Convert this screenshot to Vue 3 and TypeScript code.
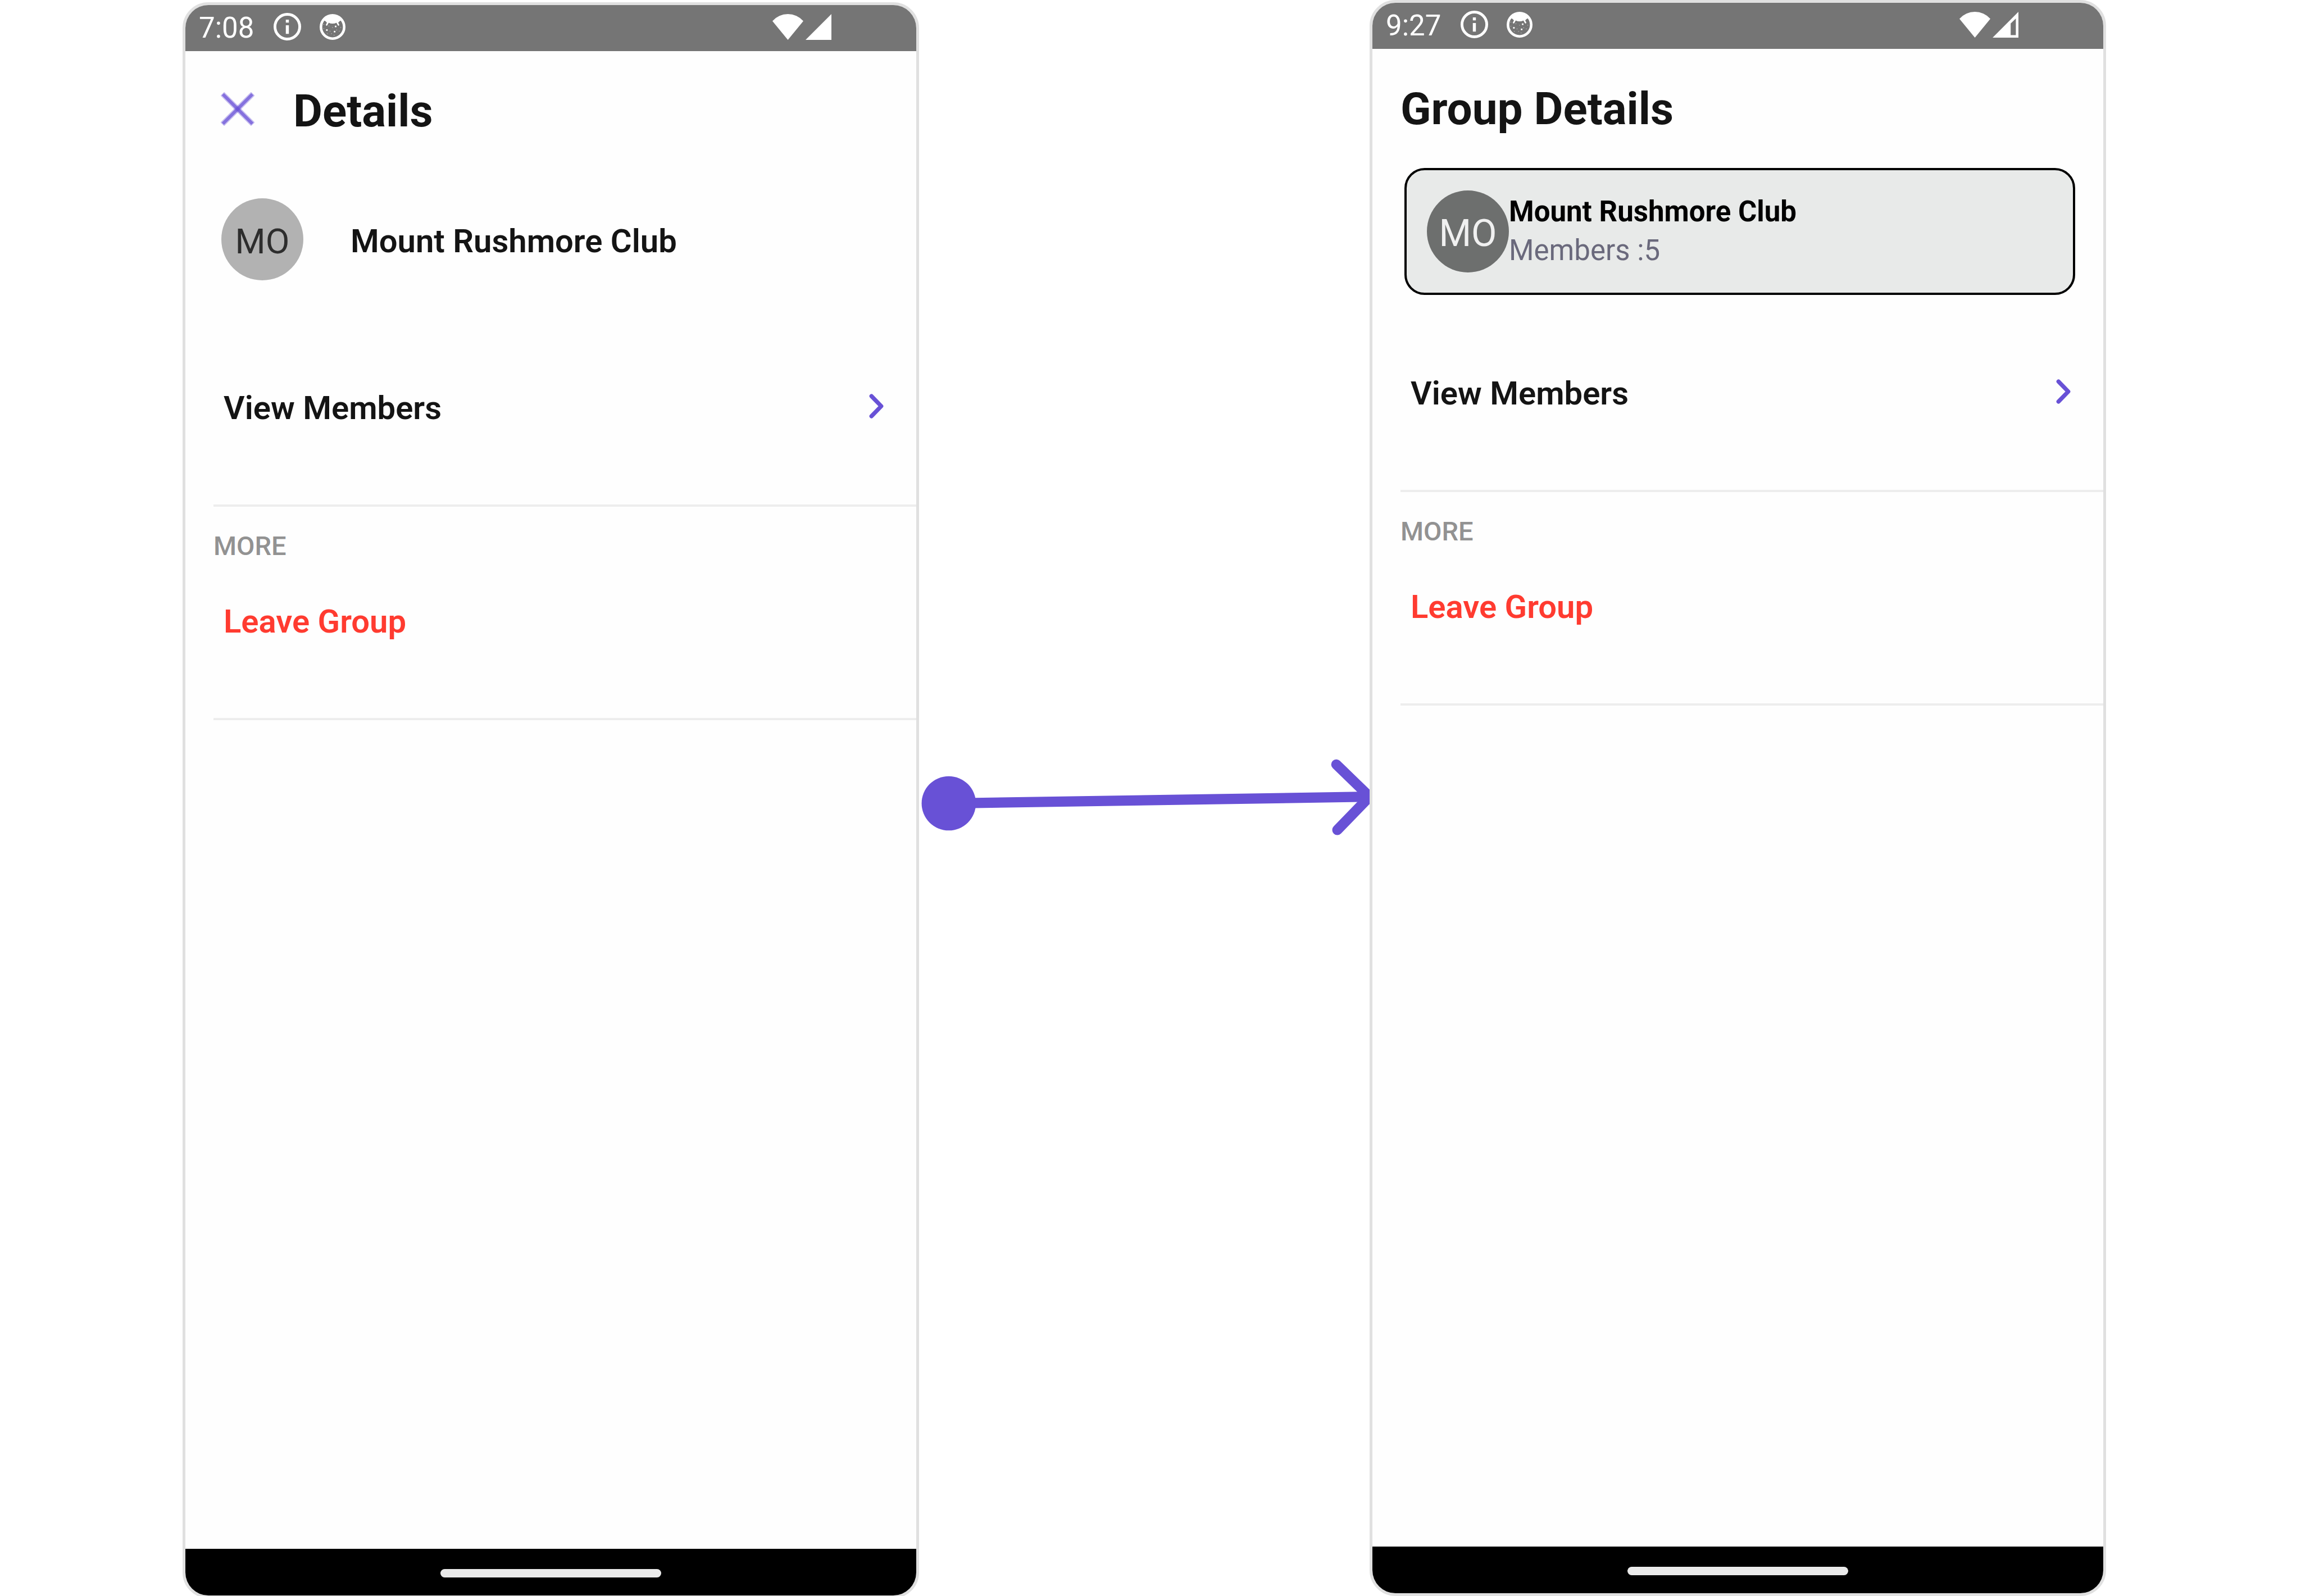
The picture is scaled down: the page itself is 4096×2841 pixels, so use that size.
<script setup lang="ts">
interface Screen {
  id: string
  time: string
  title: string
  closable: boolean
  partialSignal: boolean
  members?: number
}

const groupName = 'Mount Rushmore Club'
const initials = 'MO'

const screens: Screen[] = [
  { id: 'before', time: '7:08', title: 'Details', closable: true, partialSignal: false },
  { id: 'after', time: '9:27', title: 'Group Details', closable: false, partialSignal: true, members: 5 },
]

// Speckles in the notification glyph: x, y, size
const speckles: number[][] = [
  [31, 24, 3], [25, 26, 1], [8, 20, 1], [18, 23, 1], [41, 26, 1], [8, 28, 1], [14, 31, 3],
  [20, 33, 1], [29, 34, 3], [33, 31, 1], [38, 33, 1], [15, 38, 1], [23, 38, 1], [28, 41, 1],
]
</script>

<template>
  <main class="board">
    <section v-for="s in screens" :key="s.id" class="phone" :class="s.id">
      <div class="status">
        <span class="time">{{ s.time }}</span>
        <svg class="info" viewBox="0 0 54 54" aria-hidden="true">
          <circle cx="27" cy="27" r="24.3" fill="none" stroke="#fff" stroke-width="5.4" />
          <path d="M24 13.3h6v5.7h-6zM24 24.3h6V41h-6z" fill="#fff" />
        </svg>
        <svg class="glyph" viewBox="0 0 50 50" aria-hidden="true">
          <circle cx="25" cy="25" r="22.5" fill="none" stroke="#fff" stroke-width="5" />
          <path d="M5 12A24 24 0 0 1 45 12L41 12.5Q38 13.5 36 16.5H33Q25 20.5 17 16.5H14Q12 13.5 9 12.5Z" fill="#fff" />
          <path d="M16.5 15.5L13.5 21M33.5 15.5L36.5 21" stroke="#fff" stroke-width="3" stroke-linecap="round" />
          <rect
            v-for="(d, i) in speckles"
            :key="i"
            :x="d[0] - d[2] / 2"
            :y="d[1] - d[2] / 2"
            :width="d[2]"
            :height="d[2]"
            fill="#fff"
          />
        </svg>
        <svg class="wifi" viewBox="0 0 60 50" aria-hidden="true">
          <path d="M0 13.5A40 40 0 0 1 60 13.5L30 50Z" fill="#fff" />
        </svg>
        <svg class="signal" viewBox="0 0 50 50" aria-hidden="true">
          <path v-if="s.partialSignal" fill-rule="evenodd" d="M0 50L50 0V50ZM35 22.5V45H45V13Z" fill="#fff" />
          <path v-else d="M0 50L50 0V50Z" fill="#fff" />
        </svg>
      </div>

      <header class="header">
        <button v-if="s.closable" class="close" type="button" aria-label="Close">
          <svg viewBox="0 0 64 64" aria-hidden="true">
            <g stroke="#6851d6">
              <path d="M3 3L61 61" stroke-width="10" opacity=".35" />
              <path d="M61 3L3 61" stroke-width="10" opacity=".35" />
              <path d="M4 4L60 60" stroke-width="6" opacity=".7" />
              <path d="M60 4L4 60" stroke-width="6" opacity=".7" />
            </g>
          </svg>
        </button>
        <h1 class="title">{{ s.title }}</h1>
      </header>

      <div v-if="s.members" class="card">
        <span class="avatar">{{ initials }}</span>
        <div class="card-text">
          <strong class="card-name">{{ groupName }}</strong>
          <span class="card-count">Members :{{ s.members }}</span>
        </div>
      </div>
      <div v-else class="profile">
        <span class="avatar">{{ initials }}</span>
        <span class="profile-name">{{ groupName }}</span>
      </div>

      <div class="options">
        <button class="option" type="button">
          <span>View Members</span>
          <svg class="chevron" viewBox="0 0 28 48" aria-hidden="true">
            <path d="M4.5 4.5L23.5 24L4.5 43.5" fill="none" stroke="#6851d6" stroke-width="8" stroke-linecap="round" stroke-linejoin="round" />
          </svg>
        </button>
        <h2 class="section">MORE</h2>
        <button class="option danger" type="button">
          <span>Leave Group</span>
        </button>
      </div>

      <div class="nav"><span class="pill"></span></div>
    </section>

    <div class="link">
      <svg viewBox="0 0 880 160" aria-hidden="true">
        <g fill="none" stroke="#6851d6" stroke-width="20" stroke-linecap="round" stroke-linejoin="round">
          <path d="M58 90L880 77" />
          <path d="M815 14L880 77L817 142" />
        </g>
        <circle cx="58" cy="90" r="53" fill="#6851d6" />
      </svg>
    </div>
  </main>
</template>

<style>
body {
  margin: 0;
  background: #fff;
}
</style>

<style scoped>
.board {
  display: grid;
  grid-template-columns: 325fr 1311fr 802fr 1311fr 347fr;
  height: 100vh;
  overflow: hidden;
  font-family: Roboto, "Liberation Sans", sans-serif;
  color: #141414;
}

.phone {
  grid-row: 1;
  display: flex;
  flex-direction: column;
  box-sizing: border-box;
  height: 100vh;
  border: 5px solid #e0e0e0;
  border-radius: 46px;
  background: #fefefe;
  overflow: hidden;
}

.before {
  grid-column: 2;
  margin-top: 4px;
}

.after {
  grid-column: 4;
}

.status {
  display: flex;
  flex: none;
  align-items: center;
  height: 82px;
  padding: 0 151px 0 24px;
  background: #757575;
  color: #fff;
}

.status svg {
  display: block;
  flex: none;
  width: 46px;
  height: 46px;
  margin-bottom: 5px;
}

.time {
  font-size: 51px;
  line-height: 60px;
}

.status .info {
  width: 49px;
  height: 49px;
  margin-left: 35px;
  margin-right: 33px;
}

.status .wifi {
  width: 55px;
  margin-left: auto;
  margin-right: 4px;
}

.header {
  display: flex;
  align-items: center;
  padding: 59px 50px 0;
}

.title {
  margin: 0;
  font-size: 80px;
  font-weight: 700;
  line-height: 96px;
}

button {
  border: 0;
  padding: 0;
  background: none;
  color: inherit;
  font: inherit;
  text-align: left;
}

.close {
  margin: 0 69px 9px 13px;
}

.close svg {
  display: block;
  width: 60px;
  height: 60px;
}

.avatar {
  display: flex;
  flex: none;
  align-items: center;
  justify-content: center;
  box-sizing: border-box;
  width: 146px;
  height: 146px;
  padding-top: 6px;
  border-radius: 50%;
}

.profile {
  display: flex;
  align-items: center;
  gap: 84px;
  margin: 107px 50px 193px 64px;
}

.profile .avatar {
  background: #b2b2b2;
  color: #2d2d2d;
  font-size: 62px;
}

.profile-name {
  padding-top: 6px;
  font-size: 58px;
  font-weight: 600;
  line-height: 68px;
}

.card {
  display: flex;
  align-items: center;
  margin: 57px 50px 141px 57px;
  padding: 36px;
  border: 4px solid #000;
  border-radius: 36px;
  background: #e8eae9;
}

.card .avatar {
  background: #6d6f6e;
  color: #f0f0f0;
  font-size: 66px;
}

.card-text {
  display: flex;
  flex-direction: column;
  padding-bottom: 2px;
  font-size: 51px;
  line-height: 69px;
}

.card-name {
  color: #000;
  font-weight: 700;
}

.card-count {
  color: #6a697c;
}

.options {
  display: flex;
  flex: 1;
  flex-direction: column;
  margin-left: 50px;
}

.option {
  display: flex;
  justify-content: space-between;
  padding: 0 58px 138px 18px;
  border-bottom: 4px solid #ededed;
  font-size: 58px;
  font-weight: 600;
  line-height: 68px;
}

.danger {
  color: #ff3b30;
}

.chevron {
  display: block;
  width: 26px;
  height: 44px;
  margin-top: 9px;
}

.section {
  margin: 42px 0 72px;
  color: #929292;
  font-size: 47px;
  font-weight: 500;
  line-height: 56px;
}

.nav {
  display: flex;
  flex: none;
  justify-content: center;
  padding: 36px 0 32px;
  background: #000;
}

.pill {
  width: 393px;
  height: 15px;
  border-radius: 8px;
  background: #eaeaea;
}

.link {
  grid-row: 1;
  grid-column: 3;
  padding-top: 1348px;
}

.link svg {
  display: block;
  width: 100%;
}
</style>
